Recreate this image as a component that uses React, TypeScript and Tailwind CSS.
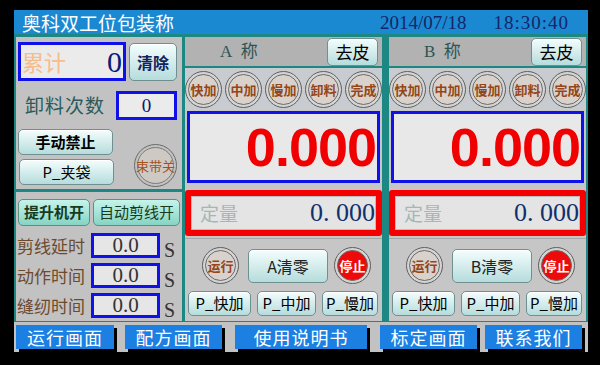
import React from 'react';

const CJK = '"Noto Sans CJK SC", "Noto Sans", sans-serif';
const SERIF = '"Liberation Serif", "Noto Sans CJK SC", serif';

const btn =
  'flex items-center justify-center rounded-[5px] border border-[#6f9090] bg-gradient-to-b from-[#f4fdfd] to-[#b6dcdc] shadow-[inset_0_1px_0_#ffffff]';
const greenBtn =
  'flex items-center justify-center rounded-[5px] border border-[#5e8e84] bg-gradient-to-b from-[#c6f4ea] to-[#86d4c4]';

const Lamp: React.FC<{ label: string; red?: boolean }> = ({ label, red }) => (
  <div className="w-[37px] h-[37px] shrink-0 rounded-full border-[1.5px] border-[#5f5f5f] bg-[#d4d4d4] flex items-center justify-center">
    <div
      className={`w-[31px] h-[31px] rounded-full border-[1.5px] border-[#6a6a6a] flex items-center justify-center ${
        red ? 'bg-[#ee0a0a]' : 'bg-[#d9d2cc]'
      }`}
    >
      <span
        className={`text-[13px] font-bold whitespace-nowrap leading-none ${red ? 'text-white' : 'text-[#94461a]'}`}
        style={{ fontFamily: CJK }}
      >
        {label}
      </span>
    </div>
  </div>
);

const Scale: React.FC<{ name: string }> = ({ name }) => (
  <div className="flex-1 flex flex-col bg-[#c6c6c6]">
    {/* header */}
    <div className="h-[31px] bg-[#b2b2b2] flex items-center border-b-2 border-[#1d8784]">
      <span className="ml-[35px] text-[17px] text-[#2b5555]" style={{ fontFamily: SERIF }}>
        {name}&nbsp;&nbsp;称
      </span>
      <div className={`${btn} ml-auto mr-[4px] w-[51px] h-[28px]`}>
        <span className="text-[17px] text-black" style={{ fontFamily: CJK }}>去皮</span>
      </div>
    </div>

    {/* lamps */}
    <div className="h-[42px] flex items-center gap-[3px] bg-[#c8ccd0]">
      {['快加', '中加', '慢加', '卸料', '完成'].map((t) => (
        <Lamp key={t} label={t} />
      ))}
    </div>

    {/* weight display */}
    <div className="mx-[2px] mt-[1px] h-[72px] border-[3px] border-[#1010e8] bg-[#e8e8e8] flex items-center justify-end pr-[1px] overflow-hidden">
      <span
        className="text-[54px] font-bold text-[#f00000] leading-none tracking-[-1px]"
        style={{ fontFamily: '"Liberation Sans", Arial, sans-serif' }}
      >
        0.000
      </span>
    </div>

    {/* set value */}
    <div className="mt-[7px] h-[46px] rounded-[3px] border-[6px] border-[#f40000] bg-[#e4e4e4] flex items-center overflow-hidden">
      <div className="flex-1 h-full flex items-center border border-[#bdbdbd]">
        <span className="ml-[8px] text-[19px] text-[#a6b6b4]" style={{ fontFamily: CJK }}>定量</span>
        <span className="ml-auto text-[26px] text-[#10306e] whitespace-nowrap leading-none" style={{ fontFamily: SERIF }}>
          0. 000
        </span>
      </div>
    </div>

    {/* lower controls */}
    <div className="flex-1 flex flex-col border-t border-[#a8a8a8] mt-[2px]">
      <div className="flex items-center mt-[8px] pl-[17px]">
        <Lamp label="运行" />
        <div className={`${btn} ml-[9px] w-[80px] h-[34px]`}>
          <span className="text-[16px] text-[#222]" style={{ fontFamily: CJK }}>{name}清零</span>
        </div>
        <div className="ml-[6px]">
          <Lamp label="停止" red />
        </div>
      </div>
      <div className="flex items-center mt-[7px] pl-[3px] gap-[6px]">
        {[
          ['P_快加', 'w-[63px]'],
          ['P_中加', 'w-[59px]'],
          ['P_慢加', 'w-[56px]'],
        ].map(([t, w]) => (
          <div key={t} className={`${btn} ${w} h-[25px]`}>
            <span className="text-[15px] text-black whitespace-nowrap" style={{ fontFamily: CJK }}>{t}</span>
          </div>
        ))}
      </div>
    </div>
  </div>
);

const NumBox: React.FC<{ label: string }> = ({ label }) => (
  <div className="h-[25px] flex items-center">
    <span className="w-[74px] text-[17px] text-[#6d4a2e] leading-none whitespace-nowrap" style={{ fontFamily: CJK }}>
      {label}
    </span>
    <div className="w-[69px] h-[25px] border-[3px] border-[#1010e8] bg-[#e6e6e6] flex items-center justify-center">
      <span className="text-[21px] text-[#333] leading-none" style={{ fontFamily: SERIF }}>0.0</span>
    </div>
    <span className="ml-[4px] mt-[8px] text-[20px] text-[#333] leading-none" style={{ fontFamily: SERIF }}>S</span>
  </div>
);

const NavBtn: React.FC<{ label: string; w: string; ml: string }> = ({ label, w, ml }) => (
  <div className={`${w} ${ml} h-[24px] bg-[#1c7fe2] shadow-[3px_3px_0_#000] flex items-center justify-center`}>
    <span className="text-[18px] text-white leading-none tracking-[1px]" style={{ fontFamily: CJK }}>{label}</span>
  </div>
);

export default function App() {
  return (
    <div className="w-[600px] h-[365px] bg-black pt-[10px] pl-[14px] overflow-hidden">
      <div className="w-[574px] flex flex-col">
        {/* title bar */}
        <div className="h-[24px] bg-[#1b88d2] flex items-center">
          <span className="ml-[8px] text-[19px] text-white leading-none" style={{ fontFamily: CJK }}>
            奥科双工位包装称
          </span>
          <span className="ml-auto mr-[27px] text-[19px] text-[#14266a] leading-none" style={{ fontFamily: SERIF }}>
            2014/07/18
          </span>
          <span className="mr-[19px] text-[19px] text-[#14266a] leading-none tracking-[1px]" style={{ fontFamily: SERIF }}>
            18:30:40
          </span>
        </div>

        {/* body */}
        <div className="h-[288px] bg-[#1d8784] flex pt-[3px] pb-[1px] px-[2px] gap-[3px]">
          {/* left column */}
          <div className="w-[166px] flex flex-col gap-[3px]">
            <div className="h-[152px] bg-[#c2c2c2] flex flex-col px-[2px] pt-[5px]">
              <div className="flex items-center gap-[3px]">
                <div className="w-[108px] h-[39px] border-[3px] border-[#1010e8] bg-[#ebebeb] flex items-center px-[1px]">
                  <span className="text-[22px] text-[#f6bc8c]" style={{ fontFamily: CJK }}>累计</span>
                  <span className="ml-auto text-[30px] text-[#0a1a7a] leading-none" style={{ fontFamily: SERIF }}>0</span>
                </div>
                <div className={`${btn} w-[48px] h-[38px]`}>
                  <span className="text-[16px] font-bold text-[#12245c]" style={{ fontFamily: CJK }}>清除</span>
                </div>
              </div>
              <div className="flex items-center mt-[10px]">
                <span className="ml-[7px] text-[19px] text-[#2b5a58] tracking-[1px]" style={{ fontFamily: CJK }}>卸料次数</span>
                <div className="ml-auto mr-[3px] w-[61px] h-[29px] border-[3px] border-[#1010e8] bg-[#ebebeb] flex items-center justify-center">
                  <span className="text-[19px] text-[#0a1a6a] leading-none" style={{ fontFamily: SERIF }}>0</span>
                </div>
              </div>
              <div className="flex items-start mt-[9px]">
                <div className="flex flex-col gap-[4px]">
                  <div className={`${btn} w-[95px] h-[26px]`}>
                    <span className="text-[15px] font-bold text-black" style={{ fontFamily: CJK }}>手动禁止</span>
                  </div>
                  <div className={`${btn} w-[95px] h-[26px] ml-[1px]`}>
                    <span className="text-[15px] text-black" style={{ fontFamily: CJK }}>P_夹袋</span>
                  </div>
                </div>
                <div className="ml-[20px] mt-[15px] w-[43px] h-[43px] rounded-full border-[1.5px] border-[#6a6a6a] flex items-center justify-center">
                  <div className="w-[37px] h-[37px] rounded-full border-[1.5px] border-[#7a7a7a] bg-[#cfc9c4] flex items-center justify-center">
                    <span className="text-[13px] text-[#a4521c] whitespace-nowrap leading-none" style={{ fontFamily: CJK }}>束带关</span>
                  </div>
                </div>
              </div>
            </div>

            <div className="flex-1 bg-[#c2c2c2] flex flex-col pl-[1px] pt-[7px]">
              <div className="flex gap-[3px] ml-[1px]">
                <div className={`${greenBtn} w-[72px] h-[27px]`}>
                  <span className="text-[15px] font-bold text-[#173a20]" style={{ fontFamily: CJK }}>提升机开</span>
                </div>
                <div className={`${greenBtn} w-[87px] h-[27px]`}>
                  <span className="text-[15px] text-[#173a20]" style={{ fontFamily: CJK }}>自动剪线开</span>
                </div>
              </div>
              <div className="flex flex-col gap-[5px] mt-[7px]">
                <NumBox label="剪线延时" />
                <NumBox label="动作时间" />
                <NumBox label="缝纫时间" />
              </div>
            </div>
          </div>

          <Scale name="A" />
          <div className="w-[1px]" />
          <Scale name="B" />
        </div>

        {/* bottom nav */}
        <div className="h-[30px] bg-[#c2c2c2] flex items-start pt-[3px] pl-[2px]">
          <NavBtn label="运行画面" w="w-[98px]" ml="ml-0" />
          <NavBtn label="配方画面" w="w-[97px]" ml="ml-[11px]" />
          <NavBtn label="使用说明书" w="w-[132px]" ml="ml-[13px]" />
          <NavBtn label="标定画面" w="w-[97px]" ml="ml-[13px]" />
          <NavBtn label="联系我们" w="w-[97px]" ml="ml-[8px]" />
        </div>
      </div>
    </div>
  );
}
